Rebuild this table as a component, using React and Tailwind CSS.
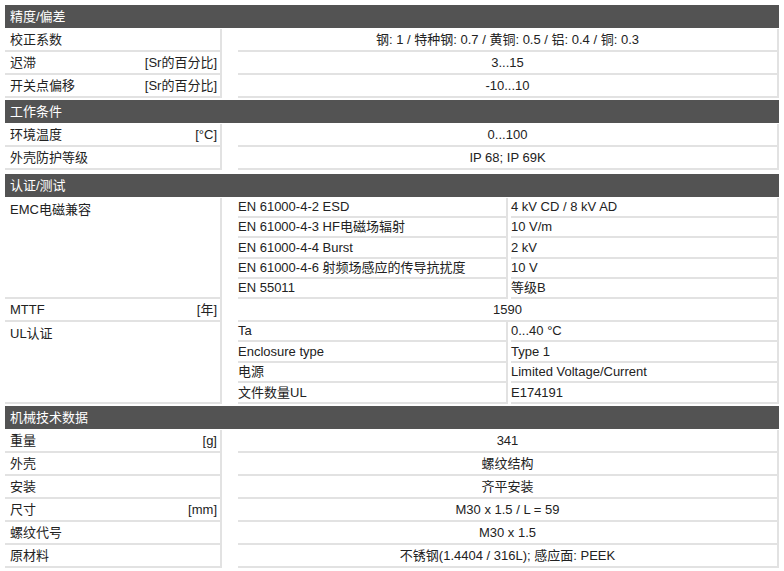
import React from "react";

const font = { fontFamily: '"Liberation Sans", "Noto Sans CJK SC", sans-serif' };

function Header({ children }) {
  return (
    <div className="h-[23px] bg-[#535353] text-white text-[13px] leading-[23px] pl-[5px] mb-[1px]">
      {children}
    </div>
  );
}

function Row({ label, unit, value }) {
  return (
    <div className="flex h-[23px] text-[13px] text-[#222]">
      <div className="w-[217px] flex justify-between items-center pl-[5px] pr-[3px] border-r-2 border-b-2 border-[#e2e2e2]">
        <span>{label}</span>
        {unit && <span>{unit}</span>}
      </div>
      <div className="w-[16px]" />
      <div className="flex-1 flex items-center justify-center border-r-2 border-b-2 border-[#e2e2e2]">
        {value}
      </div>
    </div>
  );
}

function Group({ label, rows, heights }) {
  return (
    <div className="flex text-[13px] text-[#222]">
      <div className="w-[217px] pl-[5px] pt-[2px] border-r-2 border-b-2 border-[#e2e2e2]">{label}</div>
      <div className="w-[16px]" />
      <div className="flex-1 flex flex-col">
        {rows.map((r, i) => (
          <div key={i} className="flex" style={{ height: heights[i] }}>
            <div className="w-[270px] flex items-center border-r-2 border-b-2 border-[#e2e2e2]">{r[0]}</div>
            <div className="w-[3px]" />
            <div className="flex-1 flex items-center border-r-2 border-b-2 border-[#e2e2e2]">{r[1]}</div>
          </div>
        ))}
      </div>
    </div>
  );
}

export default function App() {
  return (
    <div className="bg-white w-[784px] h-[571px] pt-[5px] pl-[5px] pr-[5px]" style={font}>
      <Header>精度/偏差</Header>
      <Row label="校正系数" value="钢: 1 / 特种钢: 0.7 / 黄铜: 0.5 / 铝: 0.4 / 铜: 0.3" />
      <Row label="迟滞" unit="[Sr的百分比]" value="3...15" />
      <Row label="开关点偏移" unit="[Sr的百分比]" value="-10...10" />
      <div className="h-[2px]" />
      <Header>工作条件</Header>
      <Row label="环境温度" unit="[°C]" value="0...100" />
      <Row label="外壳防护等级" value="IP 68; IP 69K" />
      <div className="h-[4px]" />
      <Header>认证/测试</Header>
      <Group
        label="EMC电磁兼容"
        heights={[20, 20, 21, 20, 20]}
        rows={[
          ["EN 61000-4-2 ESD", "4 kV CD / 8 kV AD"],
          ["EN 61000-4-3 HF电磁场辐射", "10 V/m"],
          ["EN 61000-4-4 Burst", "2 kV"],
          ["EN 61000-4-6 射频场感应的传导抗扰度", "10 V"],
          ["EN 55011", "等级B"],
        ]}
      />
      <Row label="MTTF" unit="[年]" value="1590" />
      <Group
        label="UL认证"
        heights={[20, 21, 20, 21]}
        rows={[
          ["Ta", "0...40 °C"],
          ["Enclosure type", "Type 1"],
          ["电源", "Limited Voltage/Current"],
          ["文件数量UL", "E174191"],
        ]}
      />
      <div className="h-[2px]" />
      <Header>机械技术数据</Header>
      <Row label="重量" unit="[g]" value="341" />
      <Row label="外壳" value="螺纹结构" />
      <Row label="安装" value="齐平安装" />
      <Row label="尺寸" unit="[mm]" value="M30 x 1.5 / L = 59" />
      <Row label="螺纹代号" value="M30 x 1.5" />
      <Row label="原材料" value="不锈钢(1.4404 / 316L); 感应面: PEEK" />
    </div>
  );
}
